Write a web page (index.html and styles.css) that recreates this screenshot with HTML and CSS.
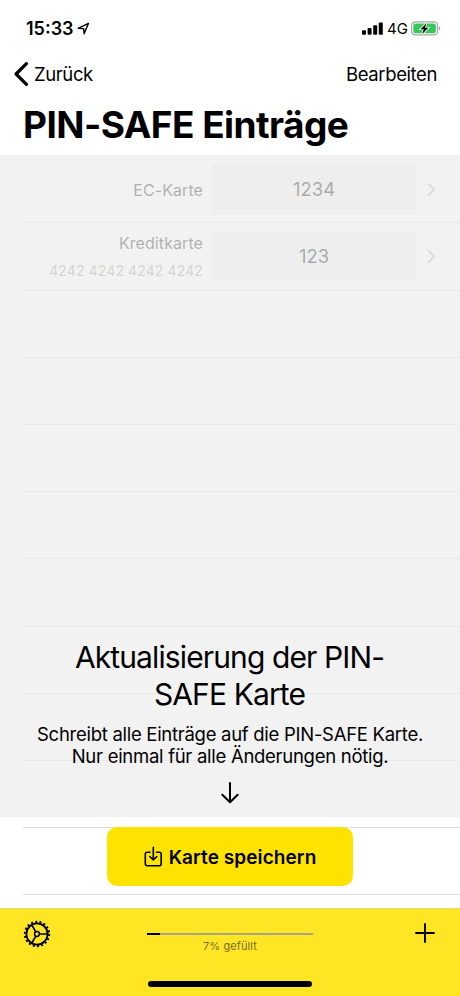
FILE: index.html
```html
<!DOCTYPE html>
<html lang="de">
<head>
    <meta charset="UTF-8">
    <meta name="viewport" content="width=device-width, initial-scale=1.0">
    <title>PIN-SAFE Einträge</title>
    <link rel="stylesheet" href="styles.css">
</head>
<body>

<div class="screen">
    <!-- Statusleiste -->
    <div class="status">
        <span class="time">15:33</span>
        <svg class="location" width="13" height="13" viewBox="0 0 13 13"><path d="M1.2 6.3 11.4 1.4 7.1 11.8 6.6 6.6Z" fill="none" stroke="#000" stroke-width="1.4" stroke-linejoin="round"/></svg>
        <svg class="signal" width="21" height="13" viewBox="0 0 21 13">
            <rect x="0" y="8.2" width="4" height="4.5" rx="1"/>
            <rect x="5.6" y="6" width="4" height="6.7" rx="1"/>
            <rect x="11.2" y="3.2" width="4" height="9.5" rx="1"/>
            <rect x="16.8" y="0.5" width="4" height="12.2" rx="1"/>
        </svg>
        <span class="network">4G</span>
        <svg class="battery" width="30" height="15" viewBox="0 0 30 15">
            <rect x="0.6" y="0.9" width="26" height="13" rx="3.8" fill="none" stroke="#a5a5a5" stroke-width="1.2"/>
            <rect x="2.3" y="2.6" width="22.6" height="9.6" rx="2.2" fill="#35c759"/>
            <path d="M28 5.2c1.6.6 1.6 3.8 0 4.4Z" fill="#a5a5a5"/>
            <path d="M15.4 2.2 9.4 8.2h3.4l-1.5 4.9 6-6.3H14Z" fill="#000" stroke="#e8f8ec" stroke-width="1.8" paint-order="stroke"/>
        </svg>
    </div>

    <div class="navbar">
        <svg class="back" width="15" height="24" viewBox="0 0 15 24"><path d="M12.4 1.7 2.1 12l10.3 10.3" fill="none" stroke="#000" stroke-width="3.2" stroke-linecap="round" stroke-linejoin="round"/></svg>
        <span class="back-label">Zurück</span>
        <span class="edit">Bearbeiten</span>
    </div>

    <h1>PIN-SAFE Einträge</h1>

    <div class="content">
        <div class="list">
            <div class="row">
                <div class="card"><div class="name">EC-Karte</div></div>
                <div class="pin">1234</div>
                <svg class="chevron" width="9" height="15" viewBox="0 0 9 15"><path d="M1.4 1.5 7.2 7.5l-5.8 6" fill="none" stroke="#b4b4b4" stroke-width="2"/></svg>
            </div>
            <div class="row">
                <div class="card">
                    <div class="name">Kreditkarte</div>
                    <div class="number">4242 4242 4242 4242</div>
                </div>
                <div class="pin">123</div>
                <svg class="chevron" width="9" height="15" viewBox="0 0 9 15"><path d="M1.4 1.5 7.2 7.5l-5.8 6" fill="none" stroke="#b4b4b4" stroke-width="2"/></svg>
            </div>
            <div class="row"></div>
            <div class="row"></div>
            <div class="row"></div>
            <div class="row"></div>
            <div class="row"></div>
            <div class="row"></div>
            <div class="row"></div>
            <div class="row"></div>
            <div class="row"></div>
        </div>

        <!-- Hinweis liegt über der Liste -->
        <div class="overlay">
            <h2>Aktualisierung der PIN-<br>SAFE Karte</h2>
            <p>Schreibt alle Einträge auf die PIN-SAFE Karte.<br>Nur einmal für alle Änderungen nötig.</p>
            <svg class="arrow" width="20" height="24" viewBox="0 0 20 24"><path d="M10 2v19M2.3 13.7 10 21.3l7.7-7.6" fill="none" stroke="#000" stroke-width="2" stroke-linecap="round" stroke-linejoin="round"/></svg>
        </div>
        <button class="save">
            <svg width="19" height="22" viewBox="0 0 19 22"><path d="M6 6.2H3.2Q1.3 6.2 1.3 8.1V17.8Q1.3 19.7 3.2 19.7H15.3Q17.2 19.7 17.2 17.8V8.1Q17.2 6.2 15.3 6.2H12.5M9.3 1.4v12.4M5.8 10.5l3.5 3.4 3.5-3.4" fill="none" stroke="#000" stroke-width="1.6" stroke-linecap="round" stroke-linejoin="round"/></svg>
            <span>Karte speichern</span>
        </button>
    </div>

    <div class="toolbar">
        <svg class="gear" width="28" height="28" viewBox="0 0 28 28" fill="none" stroke="#000">
            <circle cx="14" cy="14" r="12.2" stroke-width="2" stroke-dasharray="2 2.259"/>
            <circle cx="14" cy="14" r="10.6" stroke-width="1.8"/>
            <circle cx="14" cy="14" r="2.4" stroke-width="1.5"/>
            <path d="M16.4 14H24.6M12.8 11.9 8.7 4.8M12.8 16.1 8.7 23.2" stroke-width="1.7"/>
        </svg>
        <div class="usage">
            <div class="bar"><div class="fill" style="width: 8%"></div></div>
            <div class="usage-label">7% gefüllt</div>
        </div>
        <svg class="plus" width="20" height="20" viewBox="0 0 20 20"><path d="M10 1v18M1 10h18" stroke="#000" stroke-width="1.9" stroke-linecap="round"/></svg>
        <div class="home"></div>
    </div>
</div>

</body>
</html>
```

FILE: styles.css
```css
* {
    box-sizing: border-box;
}
body {
    margin: 0;
    font-family: Inter, "Liberation Sans", sans-serif;
    background-color: #fff;
    color: #000;
}
.screen {
    width: 460px;
    height: 996px;
    display: flex;
    flex-direction: column;
    overflow: hidden;
    white-space: nowrap;
}
.status {
    height: 50px;
    padding: 6px 19px 0 26px;
    display: flex;
    align-items: center;
}
.time {
    font-size: 18px;
    font-weight: 600;
    width: 51px;
}
.signal {
    margin-left: auto;
}
.network {
    font-size: 15px;
    margin: 0 4px 0 4px;
    width: 20px;
}
.navbar {
    height: 48px;
    padding: 0 23px 0 14px;
    display: flex;
    align-items: center;
    font-size: 18.5px;
    letter-spacing: -0.4px;
}
.back-label {
    margin-left: 5px;
}
.edit {
    margin-left: auto;
}
h1 {
    margin: 0;
    height: 58.2px;
    padding-left: 23px;
    font-size: 37px;
    line-height: 54px;
    font-weight: 700;
    letter-spacing: -0.55px;
}
.content {
    position: relative;
    height: 751.8px;
}
.row {
    height: 67.2px;
    margin-left: 23px;
    padding-right: 24px;
    border-bottom: 1px solid #dedede;
    display: flex;
    align-items: center;
}
.card {
    width: 180px;
    padding-top: 1px;
    text-align: right;
}
.name {
    font-size: 16px;
    line-height: 24px;
    letter-spacing: 0.08px;
    color: #181818;
}
.number {
    margin-top: 5px;
    font-size: 14px;
    line-height: 22px;
    letter-spacing: 0.12px;
    color: #969696;
}
.pin {
    width: 204px;
    height: 50px;
    margin-left: 9px;
    line-height: 50px;
    font-size: 18.5px;
    text-align: center;
    background-color: #f1f1f1;
}
.chevron {
    margin-left: auto;
}
.overlay {
    position: absolute;
    top: -1px;
    left: 0;
    width: 460px;
    height: 662px;
    padding-bottom: 12px;
    display: flex;
    flex-direction: column;
    align-items: center;
    justify-content: flex-end;
    text-align: center;
    background-color: rgba(237, 237, 237, 0.714);
}
h2 {
    margin: 0;
    padding-right: 1px;
    font-size: 30px;
    line-height: 37.5px;
    font-weight: 400;
    letter-spacing: -0.88px;
}
p {
    margin: 9px 0 14px;
    font-size: 18.5px;
    line-height: 22.2px;
    letter-spacing: -0.28px;
}
.save {
    position: absolute;
    top: 671px;
    left: 107px;
    width: 246px;
    height: 59px;
    padding: 1px 0 0;
    border: none;
    border-radius: 10px;
    display: flex;
    align-items: center;
    justify-content: center;
    gap: 6px;
    font-family: inherit;
    font-size: 19px;
    font-weight: 600;
    letter-spacing: 0.08px;
    color: #000;
    background-color: #ffe300;
}
.toolbar {
    height: 88px;
    padding: 11px 24px 0 23px;
    display: grid;
    grid-template-columns: 28px 166px 20px;
    grid-template-rows: 61px 6px;
    column-gap: 96px;
    border-top: 1px solid #e5d96f;
    background-color: #ffe625;
}
.usage {
    padding-top: 13px;
    text-align: center;
}
.bar {
    height: 2px;
    background-color: #a9a38a;
}
.fill {
    height: 2px;
    background-color: #000;
}
.usage-label {
    margin-top: 4px;
    font-size: 11px;
    line-height: 14px;
    letter-spacing: 0.1px;
    color: #766c26;
}
.plus {
    margin: 3.5px 0 0 6px;
}
.home {
    grid-column: 1 / 4;
    margin-left: 125px;
    width: 164px;
    height: 6px;
    border-radius: 3px;
    background-color: #000;
}
```
